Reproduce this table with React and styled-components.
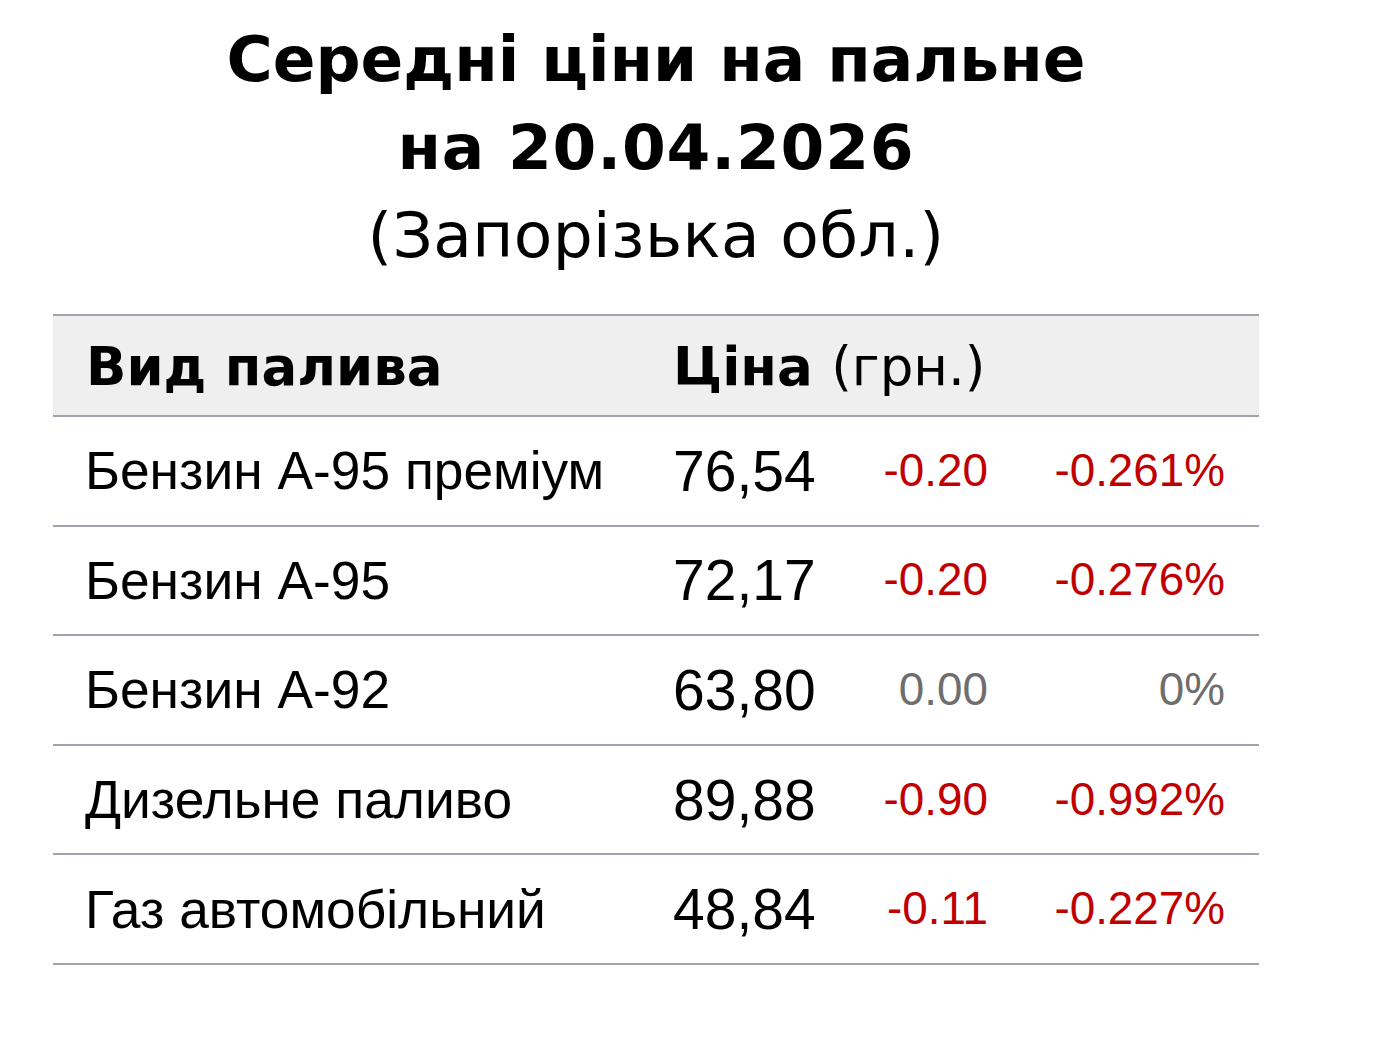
import React from "react";
import styled, { createGlobalStyle } from "styled-components";

const Global = createGlobalStyle`
  html, body { margin: 0; padding: 0; background: #fff; }
  body { font-family: "Liberation Sans", Arial, sans-serif; color: #000; }
`;

const Page = styled.div`
  width: 1206px;
  margin-left: 53px;
  padding-top: 16px;
`;

const Title = styled.h1`
  margin: 0;
  text-align: center;
  font-family: "DejaVu Sans", Verdana, sans-serif;
  font-weight: bold;
  font-size: 63px;
  line-height: 88px;
`;

const TitleLine = styled.div`
  letter-spacing: ${(p) => p.$spacing || "0"};
  font-weight: ${(p) => (p.$regular ? "normal" : "bold")};
`;

const Table = styled.div`
  margin-top: 34px;
  border-top: 2px solid #a2a2ae;
`;

const HeadRow = styled.div`
  display: grid;
  grid-template-columns: 620px 1fr;
  align-items: center;
  height: 97px;
  padding-top: 2px;
  background: #efefef;
  border-bottom: 2px solid #a2a2ae;
  font-family: "DejaVu Sans", Verdana, sans-serif;
  font-size: 53px;
`;

const HeadCell = styled.div`
  padding-left: ${(p) => (p.$first ? "33px" : "0")};
  font-weight: bold;
  white-space: nowrap;
`;

const Unit = styled.span`
  font-weight: normal;
`;

const Row = styled.div`
  display: grid;
  grid-template-columns: 620px 180px 135px 237px;
  padding-right: 34px;
  align-items: center;
  height: 107.6px;
  border-bottom: 2px solid #a2a2ae;
`;

const Name = styled.div`
  padding-left: 32px;
  font-size: 53.3px;
  white-space: nowrap;
`;

const Price = styled.div`
  font-size: 57px;
  white-space: nowrap;
`;

const Delta = styled.div`
  text-align: right;
  font-size: 45.8px;
  color: ${(p) => (p.$zero ? "#6e6e6e" : "#c00000")};
  white-space: nowrap;
`;

const rows = [
  ["Бензин А-95 преміум", "76,54", "-0.20", "-0.261%"],
  ["Бензин А-95", "72,17", "-0.20", "-0.276%"],
  ["Бензин А-92", "63,80", "0.00", "0%"],
  ["Дизельне паливо", "89,88", "-0.90", "-0.992%"],
  ["Газ автомобільний", "48,84", "-0.11", "-0.227%"],
];

export default function App() {
  return (
    <>
      <Global />
      <Page>
        <Title>
          <TitleLine>Середні ціни на пальне</TitleLine>
          <TitleLine $spacing="0.8px">на 20.04.2026</TitleLine>
          <TitleLine $regular $spacing="0.4px">(Запорізька обл.)</TitleLine>
        </Title>
        <Table>
          <HeadRow>
            <HeadCell $first>Вид палива</HeadCell>
            <HeadCell>
              Ціна <Unit>(грн.)</Unit>
            </HeadCell>
          </HeadRow>
          {rows.map(([name, price, d, pct]) => {
            const zero = parseFloat(d) === 0;
            return (
              <Row key={name}>
                <Name>{name}</Name>
                <Price>{price}</Price>
                <Delta $zero={zero}>{d}</Delta>
                <Delta $zero={zero}>{pct}</Delta>
              </Row>
            );
          })}
        </Table>
      </Page>
    </>
  );
}
